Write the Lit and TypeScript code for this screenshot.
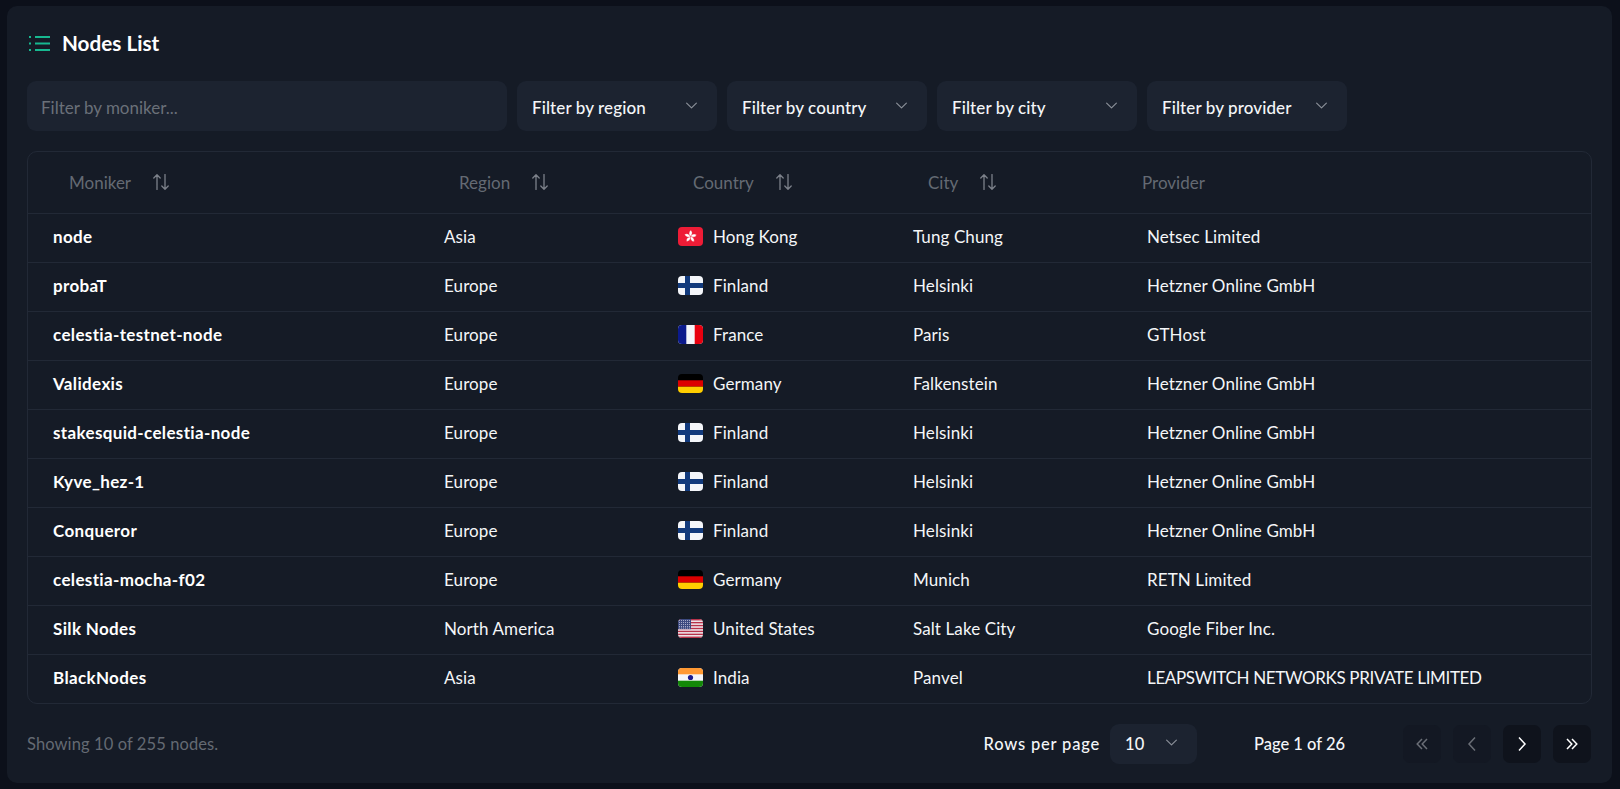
import { LitElement, html, css, svg } from 'lit';
import { customElement } from 'lit/decorators.js';

type Flag = 'hk' | 'fi' | 'fr' | 'de' | 'us' | 'in';

const rows: { moniker: string; region: string; flag: Flag; country: string; city: string; provider: string; caps?: boolean }[] = [
  { moniker: 'node', region: 'Asia', flag: 'hk', country: 'Hong Kong', city: 'Tung Chung', provider: 'Netsec Limited' },
  { moniker: 'probaT', region: 'Europe', flag: 'fi', country: 'Finland', city: 'Helsinki', provider: 'Hetzner Online GmbH' },
  { moniker: 'celestia-testnet-node', region: 'Europe', flag: 'fr', country: 'France', city: 'Paris', provider: 'GTHost' },
  { moniker: 'Validexis', region: 'Europe', flag: 'de', country: 'Germany', city: 'Falkenstein', provider: 'Hetzner Online GmbH' },
  { moniker: 'stakesquid-celestia-node', region: 'Europe', flag: 'fi', country: 'Finland', city: 'Helsinki', provider: 'Hetzner Online GmbH' },
  { moniker: 'Kyve_hez-1', region: 'Europe', flag: 'fi', country: 'Finland', city: 'Helsinki', provider: 'Hetzner Online GmbH' },
  { moniker: 'Conqueror', region: 'Europe', flag: 'fi', country: 'Finland', city: 'Helsinki', provider: 'Hetzner Online GmbH' },
  { moniker: 'celestia-mocha-f02', region: 'Europe', flag: 'de', country: 'Germany', city: 'Munich', provider: 'RETN Limited' },
  { moniker: 'Silk Nodes', region: 'North America', flag: 'us', country: 'United States', city: 'Salt Lake City', provider: 'Google Fiber Inc.' },
  { moniker: 'BlackNodes', region: 'Asia', flag: 'in', country: 'India', city: 'Panvel', provider: 'LEAPSWITCH NETWORKS PRIVATE LIMITED', caps: true },
];

const flagArt: Record<Flag, unknown> = {
  hk: svg`<rect width="25" height="19" fill="#ee1c36"/>
    <g fill="#fff" stroke="#ee1c36" stroke-width=".35">${[0, 72, 144, 216, 288].map(
      (a) => svg`<path transform="rotate(${a} 12.5 9.5)" d="M12.5 9.5C10.800 8.300 10.400 5.400 12.600 3.200 14.800 4.600 14.500 7.500 12.500 9.500z"/>`
    )}</g>`,
  fi: svg`<rect width="25" height="19" fill="#f4f6fa"/>
    <rect x="7" width="5" height="19" fill="#123a7c"/><rect y="7" width="25" height="5" fill="#123a7c"/>`,
  fr: svg`<rect width="25" height="19" fill="#f4f6fa"/>
    <rect width="8.300" height="19" fill="#0b1a8c"/><rect x="16.700" width="8.300" height="19" fill="#e8000f"/>`,
  de: svg`<rect width="25" height="19" fill="#000"/>
    <rect y="6.300" width="25" height="6.400" fill="#dd0000"/><rect y="12.700" width="25" height="6.300" fill="#ffce00"/>`,
  us: svg`<rect width="25" height="19" fill="#f2f2f6"/>
    ${[0, 2, 4, 6, 8, 10, 12].map((i) => svg`<rect y="${(i * 19) / 13}" width="25" height="1.460" fill="#b8324a"/>`)}
    <rect width="13" height="10.200" fill="#3c4a80"/>
    ${[1.500, 3.500, 5.500, 7.500, 9].map((y) =>
      [1.500, 3.500, 5.500, 7.500, 9.500, 11.500].map((x) => svg`<circle cx="${x}" cy="${y}" r=".5" fill="#c9cbe0"/>`)
    )}`,
  in: svg`<rect width="25" height="19" fill="#f4f6fa"/>
    <rect width="25" height="6.300" fill="#ff9933"/><rect y="12.700" width="25" height="6.300" fill="#138808"/>
    <circle cx="12.500" cy="9.500" r="2.600" fill="#1a1a8c"/>`,
};

const sortIcon = html`<svg class="sort" viewBox="0 0 16 16" fill="none" stroke="currentColor" stroke-width="1.300" stroke-linecap="round" stroke-linejoin="round">
  <path d="M4 15.500V.8M.8 4 4 .8 7.200 4M12 .5v14.700M8.800 12 12 15.200 15.200 12"/>
</svg>`;

const chevron = html`<svg class="chev" viewBox="0 0 12 12" fill="none" stroke="currentColor" stroke-width="1.100" stroke-linecap="round" stroke-linejoin="round">
  <path d="M1.500 3.800 6 8.200l4.500-4.400"/>
</svg>`;

@customElement('app-root')
export class AppRoot extends LitElement {
  static styles = css`
    :host {
      display: block;
      height: 789px;
      box-sizing: border-box;
      padding: 6px 8px 6px 7px;
      background: #0c101a;
      font-family: 'Lato', 'Liberation Sans', sans-serif;
      font-size: 17px;
      color: #f4f6f8;
    }
    .card {
      height: 777px;
      box-sizing: border-box;
      padding: 20px;
      background: #151b26;
      border-radius: 10px;
    }
    .title {
      display: flex;
      align-items: center;
      gap: 12px;
      height: 34px;
      padding-left: 2px;
      margin-bottom: 21px;
      font-size: 20.700px;
      font-weight: 700;
      color: #fff;
    }
    .title svg {
      width: 21px;
      height: 15px;
    }
    .filters {
      display: flex;
      gap: 10px;
      margin-bottom: 20px;
    }
    .control {
      display: flex;
      align-items: center;
      justify-content: space-between;
      box-sizing: border-box;
      height: 50px;
      width: 200px;
      padding: 2px 19px 0 15px;
      background: #1c2330;
      border-radius: 9px;
      font-weight: 500;
      letter-spacing: 0.1px;
    }
    .control.search {
      width: 480px;
      padding-left: 14px;
      color: #6a7079;
      font-weight: 400;
      letter-spacing: 0;
    }
    .chev {
      width: 13px;
      height: 13px;
      margin-bottom: 3px;
      color: #8a8f98;
      flex: none;
    }
    .table {
      border: 1px solid #222936;
      border-radius: 10px;
      box-sizing: border-box;
    }
    .row {
      display: grid;
      grid-template-columns: 416px 234px 235px 234px 1fr;
      align-items: center;
      height: 49px;
      padding-bottom: 4px;
      box-sizing: border-box;
      border-top: 1px solid #222936;
      letter-spacing: 0.1px;
    }
    .row.head {
      height: 61px;
      padding-bottom: 1px;
      border-top: 0;
      color: #646a73;
      letter-spacing: 0;
    }
    .head > div {
      display: flex;
      align-items: center;
      gap: 22px;
      padding-left: 15px;
    }
    .head > div:first-child {
      padding-left: 41px;
    }
    .head > div:last-child {
      padding-left: 0;
      margin-left: -5px;
    }
    .sort {
      width: 16px;
      height: 16px;
      color: #7c818a;
    }
    .moniker {
      padding-left: 25px;
      font-weight: 700;
      letter-spacing: 0.35px;
      color: #fff;
    }
    .caps {
      letter-spacing: -0.35px;
    }
    .country {
      display: flex;
      align-items: center;
      gap: 10px;
    }
    .flag {
      width: 25px;
      height: 19px;
      border-radius: 4px;
      flex: none;
    }
    .footer {
      display: flex;
      align-items: center;
      margin-top: 20px;
      padding-right: 1px;
      height: 40px;
      font-size: 16.500px;
    }
    .count {
      color: #646a73;
      letter-spacing: 0.1px;
      flex: 1;
    }
    .perpage {
      margin-right: 10px;
      font-weight: 500;
      letter-spacing: 0.8px;
    }
    .control.size {
      width: 87px;
      height: 40px;
      margin-right: 57px;
      padding-top: 0;
    }
    .page {
      width: 149px;
      font-weight: 500;
    }
    .pager {
      display: flex;
      gap: 12px;
    }
    .pager button {
      display: flex;
      align-items: center;
      justify-content: center;
      width: 38px;
      height: 38px;
      padding: 0;
      border: 0;
      border-radius: 7px;
      background: #0f131c;
      color: #fff;
    }
    .pager button[disabled] {
      background: #131823;
      color: #6a6e76;
    }
    .pager svg {
      width: 14px;
      height: 14px;
    }
  `;

  pagerIcon(d: string, disabled: boolean) {
    return html`<button ?disabled=${disabled}>
      <svg viewBox="0 0 14 14" fill="none" stroke="currentColor" stroke-width="1.500" stroke-linejoin="miter"><path d=${d} /></svg>
    </button>`;
  }

  render() {
    return html`
      <div class="card">
        <div class="title">
          <svg viewBox="0 0 21 15" fill="none" stroke="#17b890" stroke-width="2">
            <path d="M6 1h15M6 7.500h15M6 14h15" />
            <path d="M0 1h2M0 7.500h2M0 14h2" />
          </svg>
          Nodes List
        </div>
        <div class="filters">
          <div class="control search">Filter by moniker...</div>
          ${['region', 'country', 'city', 'provider'].map(
            (f) => html`<div class="control">Filter by ${f} ${chevron}</div>`
          )}
        </div>
        <div class="table">
          <div class="row head">
            <div>Moniker ${sortIcon}</div>
            <div>Region ${sortIcon}</div>
            <div>Country ${sortIcon}</div>
            <div>City ${sortIcon}</div>
            <div>Provider</div>
          </div>
          ${rows.map(
            (r) => html`<div class="row">
              <div class="moniker">${r.moniker}</div>
              <div>${r.region}</div>
              <div class="country">
                <svg class="flag" viewBox="0 0 25 19">${flagArt[r.flag]}</svg>
                ${r.country}
              </div>
              <div>${r.city}</div>
              <div class=${r.caps ? 'caps' : ''}>${r.provider}</div>
            </div>`
          )}
        </div>
        <div class="footer">
          <div class="count">Showing 10 of 255 nodes.</div>
          <div class="perpage">Rows per page</div>
          <div class="control size">10 ${chevron}</div>
          <div class="page">Page 1 of 26</div>
          <div class="pager">
            ${this.pagerIcon('M7 2 2.200 7 7 12M12 2 7.200 7 12 12', true)}
            ${this.pagerIcon('M10 .5 4 7l6 6.500', true)}
            ${this.pagerIcon('M4 .5 10 7l-6 6.500', false)}
            ${this.pagerIcon('M2 2l4.800 5L2 12M7 2l4.800 5L7 12', false)}
          </div>
        </div>
      </div>
    `;
  }
}
